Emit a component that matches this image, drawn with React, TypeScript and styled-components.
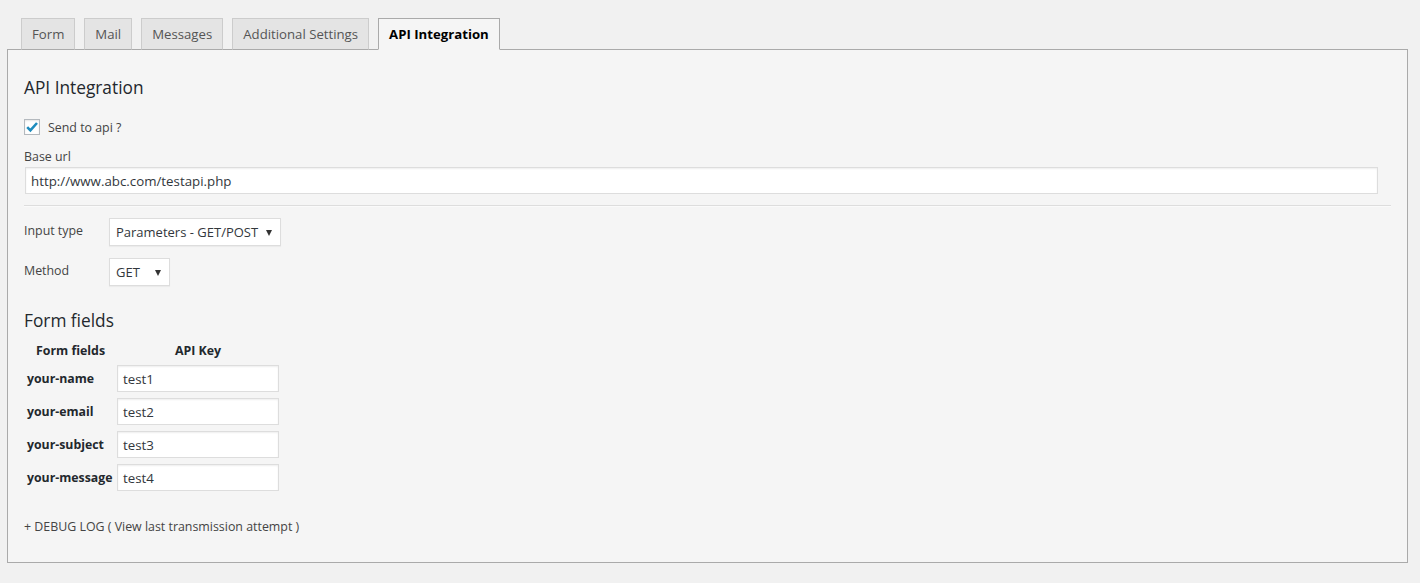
import { Fragment } from "react";
import styled, { createGlobalStyle } from "styled-components";

const GlobalStyle = createGlobalStyle`
  body {
    margin: 0;
    background: #f1f1f1;
    font-family: "Open Sans", "Noto Sans", sans-serif;
    color: #444;
  }
`;

interface TabProps {
  $active?: boolean;
}

const Page = styled.div`
  padding: 18px 12px 22px 7px;
`;

const TabBar = styled.ul`
  display: flex;
  gap: 9px;
  margin: 0 0 -1px 0;
  padding: 0 0 0 14px;
  list-style: none;
  position: relative;
  z-index: 1;
`;

const Tab = styled.li<TabProps>`
  box-sizing: border-box;
  height: 32px;
  padding: 0 10px;
  display: flex;
  align-items: center;
  font-size: 13.2px;
  border: 1px solid ${(p) => (p.$active ? "#aaa" : "#ccc")};
  border-bottom-color: ${(p) => (p.$active ? "#f5f5f5" : "#aaa")};
  background: ${(p) => (p.$active ? "#f5f5f5" : "#e4e4e4")};
  color: ${(p) => (p.$active ? "#000" : "#555")};
  font-weight: ${(p) => (p.$active ? 700 : 400)};
  cursor: pointer;
`;

const Panel = styled.div`
  border: 1px solid #aaa;
  background: #f5f5f5;
  padding: 0 16px 26px 16px;
  display: flex;
  flex-direction: column;
`;

const Heading = styled.h2<{ $gap: number }>`
  margin: ${(p) => p.$gap}px 0 0 0;
  font-size: 17.3px;
  line-height: 24px;
  font-weight: 400;
  color: #23282d;
`;

const CheckRow = styled.label`
  display: flex;
  align-items: center;
  gap: 8px;
  margin-top: 19px;
  font-size: 12.4px;
  line-height: 16px;
`;

const CheckText = styled.span`
  position: relative;
  top: 1px;
`;

const CheckBox = styled.span`
  box-sizing: border-box;
  width: 16px;
  height: 16px;
  border: 1px solid #b4b9be;
  background: #fff;
  box-shadow: inset 0 1px 2px rgba(0, 0, 0, 0.1);
  display: flex;
  align-items: center;
  justify-content: center;
`;

const FieldLabel = styled.div`
  margin-top: 13px;
  font-size: 12.4px;
  line-height: 18px;
`;

const TextInput = styled.div<{ $width: string }>`
  box-sizing: border-box;
  width: ${(p) => p.$width};
  height: 27px;
  margin-left: 1px;
  padding: 0 5px;
  display: flex;
  align-items: center;
  background: #fff;
  border: 1px solid #ddd;
  box-shadow: inset 0 1px 2px rgba(0, 0, 0, 0.07);
  font-size: 13.3px;
  color: #32373c;
`;

const UrlInput = styled(TextInput)`
  margin-top: 1px;
`;

const Divider = styled.hr`
  margin: 11px 0 0 0;
  border: 0;
  border-top: 1px solid #ddd;
  border-bottom: 1px solid #fafafa;
`;

const OptionRow = styled.div<{ $gap: number }>`
  display: flex;
  align-items: center;
  margin-top: ${(p) => p.$gap}px;
`;

const OptionLabel = styled.span`
  width: 85px;
  font-size: 12.4px;
  line-height: 18px;
  margin-top: -2px;
`;

const Select = styled.div<{ $width: number }>`
  box-sizing: border-box;
  width: ${(p) => p.$width}px;
  height: 28px;
  padding: 0 8px 0 6px;
  display: flex;
  align-items: center;
  justify-content: space-between;
  background: #fff;
  border: 1px solid #ddd;
  box-shadow: 0 1px 1px rgba(0, 0, 0, 0.04);
  font-size: 13px;
  color: #32373c;
  white-space: nowrap;
`;

const Arrow = styled.span`
  flex: none;
  width: 0;
  height: 0;
  border-left: 3.5px solid transparent;
  border-right: 3.5px solid transparent;
  border-top: 6px solid #333;
  margin-top: 1px;
`;

const FieldTable = styled.div`
  display: grid;
  grid-template-columns: 93px 162px;
  row-gap: 6px;
  margin-top: 8px;
  align-items: center;
`;

const HeadCell = styled.div`
  position: relative;
  top: 1px;
  font-size: 12.4px;
  font-weight: 700;
  line-height: 18px;
  color: #23282d;
  text-align: center;
`;

const KeyCell = styled.div`
  padding-left: 3px;
  font-size: 12.3px;
  font-weight: 700;
  color: #23282d;
  white-space: nowrap;
  margin-top: -1px;
`;

const KeyInput = styled(TextInput)`
  margin-left: 0;
`;

const DebugLink = styled.div`
  margin-top: 27px;
  font-size: 12.4px;
  line-height: 18px;
  color: #444;
  cursor: pointer;
`;

const tabs = ["Form", "Mail", "Messages", "Additional Settings", "API Integration"];

const fields = [
  { name: "your-name", key: "test1" },
  { name: "your-email", key: "test2" },
  { name: "your-subject", key: "test3" },
  { name: "your-message", key: "test4" },
];

const App = () => {
  return (
    <Page>
      <GlobalStyle />
      <TabBar>
        {tabs.map((t) => (
          <Tab key={t} $active={t === "API Integration"}>
            {t}
          </Tab>
        ))}
      </TabBar>
      <Panel>
        <Heading $gap={26}>API Integration</Heading>
        <CheckRow>
          <CheckBox>
            <svg width="14" height="14" viewBox="0 0 14 14">
              <polyline
                points="2.2,7.2 5.4,10.4 12,3"
                fill="none"
                stroke="#1e8cbe"
                strokeWidth="2.6"
              />
            </svg>
          </CheckBox>
          <CheckText>Send to api ?</CheckText>
        </CheckRow>
        <FieldLabel>Base url</FieldLabel>
        <UrlInput $width="99%">http://www.abc.com/testapi.php</UrlInput>
        <Divider />
        <OptionRow $gap={11}>
          <OptionLabel>Input type</OptionLabel>
          <Select $width={172}>
            Parameters - GET/POST
            <Arrow />
          </Select>
        </OptionRow>
        <OptionRow $gap={12}>
          <OptionLabel>Method</OptionLabel>
          <Select $width={61}>
            GET
            <Arrow />
          </Select>
        </OptionRow>
        <Heading $gap={23}>Form fields</Heading>
        <FieldTable>
          <HeadCell>Form fields</HeadCell>
          <HeadCell>API Key</HeadCell>
          {fields.map((f) => (
            <Fragment key={f.name}>
              <KeyCell>{f.name}</KeyCell>
              <KeyInput $width="162px">{f.key}</KeyInput>
            </Fragment>
          ))}
        </FieldTable>
        <DebugLink>+ DEBUG LOG ( View last transmission attempt )</DebugLink>
      </Panel>
    </Page>
  );
};

export default App;
